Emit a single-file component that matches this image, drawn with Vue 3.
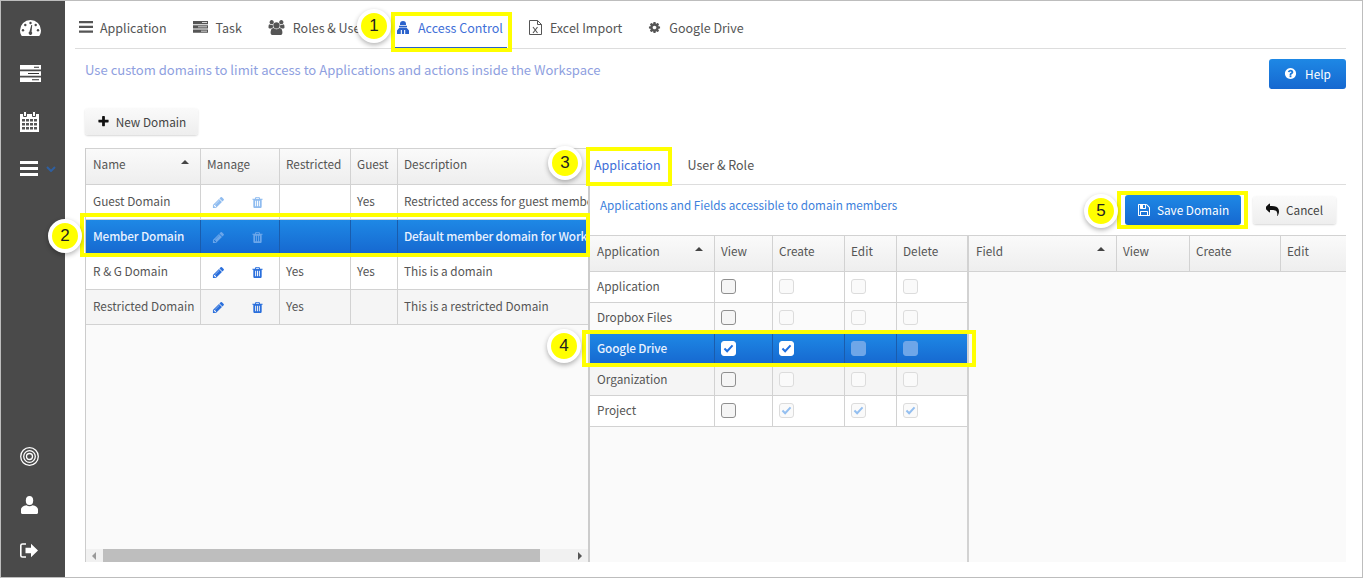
<script setup>
const P = {
  pencil: 'M491 1536l91-91-235-235-91 91v107h128v128h107zm523-928q0-22-22-22-10 0-17 7l-542 542q-7 7-7 17 0 22 22 22 10 0 17-7l542-542q7-7 7-17zm-54-192l416 416-832 832h-416v-416zm683 96q0 53-37 90l-166 166-416-416 166-165q36-38 90-38 53 0 91 38l235 234q37 39 37 91z',
  trash: 'M704 1376v-704q0-14-9-23t-23-9h-64q-14 0-23 9t-9 23v704q0 14 9 23t23 9h64q14 0 23-9t9-23zm256 0v-704q0-14-9-23t-23-9h-64q-14 0-23 9t-9 23v704q0 14 9 23t23 9h64q14 0 23-9t9-23zm256 0v-704q0-14-9-23t-23-9h-64q-14 0-23 9t-9 23v704q0 14 9 23t23 9h64q14 0 23-9t9-23zm-544-992h448l-48-117q-7-9-17-11h-317q-10 2-17 11zm928 32v64q0 14-9 23t-23 9h-96v948q0 83-47 143.500t-113 60.500h-832q-66 0-113-58.500t-47-141.500v-952h-96q-14 0-23-9t-9-23v-64q0-14 9-23t23-9h309l70-167q15-37 54-63t79-26h320q40 0 79 26t54 63l70 167h309q14 0 23 9t9 23z',
  cog: 'M1152 896q0-106-75-181t-181-75-181 75-75 181 75 181 181 75 181-75 75-181zm512-109v222q0 12-8 23t-20 13l-185 28q-19 54-39 91 35 50 107 138 10 12 10 25t-9 23q-27 37-99 108t-94 71q-12 0-26-9l-138-108q-44 23-91 38-16 136-29 186-7 28-36 28h-222q-14 0-24.500-8.500t-11.500-21.500l-28-184q-49-16-90-37l-141 107q-10 9-25 9-14 0-25-11-126-114-165-168-7-10-7-23 0-12 8-23 15-21 51-66.500t54-70.500q-27-50-41-99l-183-27q-13-2-21-12.500t-8-23.500v-222q0-12 8-23t19-13l186-28q14-46 39-92-40-57-107-138-10-12-10-24 0-10 9-23 26-36 98.500-107.500t94.500-71.500q13 0 26 10l138 107q44-23 91-38 16-136 29-186 7-28 36-28h222q14 0 24.500 8.500t11.500 21.500l28 184q49 16 90 37l142-107q9-9 24-9 13 0 25 10 129 119 165 170 7 8 7 22 0 12-8 23-15 21-51 66.500t-54 70.500q26 50 41 98l183 28q13 2 21 12.500t8 23.500z',
  save: 'M512 1536h768v-384h-768v384zm896 0h128v-896q0-14-10-38.500t-20-34.500l-281-281q-10-10-34-20t-39-10v416q0 40-28 68t-68 28h-576q-40 0-68-28t-28-68v-416h-128v1280h128v-416q0-40 28-68t68-28h832q40 0 68 28t28 68v416zm-384-928v-320q0-13-9.500-22.500t-22.500-9.500h-192q-13 0-22.500 9.500t-9.500 22.500v320q0 13 9.500 22.500t22.500 9.500h192q13 0 22.500-9.500t9.500-22.500zm640 32v928q0 40-28 68t-68 28h-1344q-40 0-68-28t-28-68v-1344q0-40 28-68t68-28h928q40 0 88 20t76 48l280 280q28 28 48 76t20 88z',
  reply: 'M1664 1120q0 166-127 451-3 7-10.500 24t-13.500 30-13 22q-12 17-28 17-15 0-23.500-10t-8.500-25q0-9 2.500-26.500t2.500-23.500q5-68 5-123 0-101-17.500-181t-48.500-138.500-80-101-105.500-69.500-133-42.500-154-21.500-175.500-6h-224v256q0 26-19 45t-45 19-45-19l-512-512q-19-19-19-45t19-45l512-512q19-19 45-19t45 19 19 45v256h224q713 0 875 403 53 134 53 333z',
  question: 'M1024 1376v-192q0-14-9-23t-23-9h-192q-14 0-23 9t-9 23v192q0 14 9 23t23 9h192q14 0 23-9t9-23zm256-672q0-88-55.500-163t-138.500-116-170-41q-243 0-371 213-15 24 8 42l132 100q7 6 19 6 16 0 25-12 53-68 86-92 34-24 86-24 48 0 85.500 26t37.500 59q0 38-20 61t-68 45q-63 28-115.500 86.500t-52.500 125.500v36q0 14 9 23t23 9h192q14 0 23-9t9-23q0-19 21.500-49.500t54.500-49.500q32-18 49-28.500t46-35 44.500-48 28-60.500 12.500-81zm384 192q0 209-103 385.500t-279.500 279.500-385.500 103-385.500-103-279.500-279.500-103-385.500 103-385.500 279.500-279.500 385.500-103 385.500 103 279.500 279.500 103 385.500z',
  plus: 'M1600 736v192q0 40-28 68t-68 28h-416v416q0 40-28 68t-68 28h-192q-40 0-68-28t-28-68v-416h-416q-40 0-68-28t-28-68v-192q0-40 28-68t68-28h416v-416q0-40 28-68t68-28h192q40 0 68 28t28 68v416h416q40 0 68 28t28 68z',
  users: 'M593 896q-162 5-265 128h-134q-82 0-138-40.500t-56-118.500q0-353 124-353 6 0 43.500 21t97.500 42.500 119 21.500q67 0 133-23-5 37-5 66 0 139 81 256zm1071 637q0 120-73 189.500t-194 69.500h-874q-121 0-194-69.500t-73-189.500q0-53 3.500-103.500t14-109 26.500-108.500 43-97.500 62-81 85.500-53.500 111.500-20q10 0 43 21.500t73 48 107 48 135 21.500 135-21.500 107-48 73-48 43-21.500q61 0 111.500 20t85.500 53.500 62 81 43 97.500 26.500 108.500 14 109 3.500 103.500zm-1024-1277q0 106-75 181t-181 75-181-75-75-181 75-181 181-75 181 75 75 181zm704 384q0 159-112.500 271.500t-271.500 112.500-271.500-112.500-112.500-271.500 112.500-271.500 271.500-112.500 271.500 112.500 112.500 271.500zm576 225q0 78-56 118.500t-138 40.500h-134q-103-123-265-128 81-117 81-256 0-29-5-66 66 23 133 23 59 0 119-21.500t97.500-42.500 43.500-21q124 0 124 353zm-128-609q0 106-75 181t-181 75-181-75-75-181 75-181 181-75 181 75 75 181z',
}

const tabs = [
  { label: 'Application', icon: 'bars' },
  { label: 'Task', icon: 'server' },
  { label: 'Roles & Users', icon: 'users' },
  { label: 'Access Control', icon: 'lock', active: true },
  { label: 'Excel Import', icon: 'excel' },
  { label: 'Google Drive', icon: 'cog' },
]

const domains = [
  { name: 'Guest Domain', guest: 'Yes', restricted: '', desc: 'Restricted access for guest members of the Workspace', faded: true },
  { name: 'Member Domain', guest: '', restricted: '', desc: 'Default member domain for Workspace users and teams', faded: true, selected: true },
  { name: 'R & G Domain', guest: 'Yes', restricted: 'Yes', desc: 'This is a domain' },
  { name: 'Restricted Domain', guest: '', restricted: 'Yes', desc: 'This is a restricted Domain', alt: true },
]

const apps = [
  { name: 'Application', boxes: [{}, { off: true }, { off: true }, { off: true }] },
  { name: 'Dropbox Files', boxes: [{}, { off: true }, { off: true }, { off: true }], soft: true },
  { name: 'Google Drive', selected: true, boxes: [{ on: true }, { on: true }, { off: true }, { off: true }] },
  { name: 'Organization', alt: true, boxes: [{}, { off: true }, { off: true }, { off: true }] },
  { name: 'Project', boxes: [{}, { off: true, on: true }, { off: true, on: true }, { off: true, on: true }] },
]

const marks = [
  { n: 1, box: 'b1', badge: 'm1' },
  { n: 2, box: 'b2', badge: 'm2' },
  { n: 3, box: 'b3', badge: 'm3' },
  { n: 4, box: 'b4', badge: 'm4' },
  { n: 5, box: 'b5', badge: 'm5' },
]
</script>

<template>
  <div class="shell">
    <aside class="rail">
      <div class="rail-group">
        <svg class="ri ri-dash" viewBox="0 0 21 16"><path fill="#fff" d="M10.500 0A10.500 10.500 0 0 0 0 10.500c0 1.800.4 3.400 1.200 4.800.2.400.5.700 1 .7h16.600c.5 0 .8-.3 1-.7.800-1.400 1.200-3 1.200-4.800A10.500 10.500 0 0 0 10.500 0z"/><g fill="#4a4a4a"><circle cx="10.500" cy="3" r="1.200"/><circle cx="5.300" cy="5" r="1.200"/><circle cx="15.700" cy="5" r="1.200"/><circle cx="3" cy="10.300" r="1.200"/><circle cx="18" cy="10.300" r="1.200"/><path d="M9.500 11.500l1.800-6.500h.9l-.6 6.700a1.800 1.800 0 1 1-2.100-.2z"/></g></svg>
        <svg class="ri ri-srv" viewBox="0 0 21 17"><path fill="#fff" d="M0 0h21v4.500H0zM0 6.200h21v4.500H0zM0 12.400h21v4.500H0z"/><path fill="#333" d="M14 1.800h5v1h-5zM8 8h11v1H8zM12 14.200h7v1h-7z"/></svg>
        <svg class="ri ri-cal" viewBox="0 0 19 21"><path fill="#fff" d="M0 3h19v18H0z"/><path fill="#fff" stroke="#4a4a4a" d="M3.500 .5h3v5h-3zM12.500 .5h3v5h-3z"/><g fill="#555"><path d="M2 8h3v2.500H2zM6 8h3v2.500H6zM10 8h3v2.500h-3zM14 8h3v2.500h-3zM2 12h3v2.500H2zM6 12h3v2.500H6zM10 12h3v2.500h-3zM14 12h3v2.500h-3zM2 16h3v2.500H2zM6 16h3v2.500H6zM10 16h3v2.500h-3zM14 16h3v2.500h-3z"/></g></svg>
        <div class="rail-menu">
          <svg class="ri-bars" viewBox="0 0 18 15"><path fill="#fff" d="M0 0h18v3H0zM0 6h18v3H0zM0 12h18v3H0z"/></svg>
          <svg class="chev" viewBox="0 0 10 6"><path fill="none" stroke="#2f5f9f" stroke-width="2" d="M1 1l4 4 4-4"/></svg>
        </div>
      </div>
      <div class="rail-group rail-bottom">
        <svg class="ri ri-target" viewBox="0 0 19 19"><g fill="none" stroke="#fff" stroke-width="1.300"><circle cx="9.500" cy="9.500" r="8.800"/><circle cx="9.500" cy="9.500" r="5.800"/><circle cx="9.500" cy="9.500" r="3"/></g></svg>
        <svg class="ri ri-user" viewBox="0 0 17 18"><ellipse cx="8.500" cy="4.500" rx="3.700" ry="4.500" fill="#fff"/><path fill="#fff" d="M1.200 18c-.7 0-1.200-.5-1.200-1.200v-3.300c0-2 2.300-3.900 5.500-4.300.8.600 1.900 1 3 1s2.200-.4 3-1c3.200.4 5.500 2.300 5.500 4.300v3.300c0 .7-.5 1.200-1.200 1.200z"/></svg>
        <svg class="ri ri-out" viewBox="0 0 18 15"><path fill="none" stroke="#fff" stroke-width="1.600" d="M6 1H2.500C1.500 1 .8 1.700.8 2.600v9.800c0 .9.700 1.600 1.700 1.600H6"/><path fill="#fff" d="M5.500 4.800H11V.8l7 6.700-7 6.700v-4H5.500z"/></svg>
      </div>
    </aside>

    <main class="main">
      <nav class="tabs">
        <a v-for="t in tabs" :key="t.label" class="tab" :class="{ active: t.active }">
          <svg v-if="t.icon === 'bars'" class="ti ti-bars" viewBox="0 0 14 12"><path d="M0 0h14v2.200H0zM0 4.800h14V7H0zM0 9.600h14v2.200H0z"/></svg>
          <svg v-else-if="t.icon === 'server'" class="ti" viewBox="0 0 15 12"><path d="M0 0h15v3.200H0zM0 4.300h15v3.200H0zM0 8.600h15v3.200H0z"/><path fill="#fff" d="M9 1.200h5v.8H9zM5 5.500h9v.8H5zM8 9.800h6v.8H8z"/></svg>
          <svg v-else-if="t.icon === 'users'" class="ti ti-users" viewBox="0 0 1920 1792"><path :d="P.users"/></svg>
          <svg v-else-if="t.icon === 'lock'" class="ti ti-lock" viewBox="0 0 12 13"><path fill="#2a62cc" d="M3 3a3 3 0 0 1 6 0v1H3zM2 4.700h8v1.300H2zM2.500 6.500h7L12 9.500V13H0V9.500z"/><path fill="#fff" d="M3.800 9h1.100v4H3.800zM7.100 9h1.100v4H7.100z"/></svg>
          <svg v-else-if="t.icon === 'excel'" class="ti ti-excel" viewBox="0 0 13 15"><path fill="none" stroke="#555" d="M.5.500h8l4 4v10H.5zM8.500.5v4h4"/><path fill="none" stroke="#555" stroke-width="1.100" d="M4 7l4.500 6M8.500 7L4 13"/></svg>
          <svg v-else class="ti ti-cog" viewBox="0 0 1792 1792"><path :d="P.cog"/></svg>
          <span>{{ t.label }}</span>
        </a>
      </nav>

      <header class="intro">
        <p>Use custom domains to limit access to Applications and actions inside the Workspace</p>
        <button class="btn primary help"><svg class="bi" viewBox="0 0 1792 1792"><path fill="#fff" :d="P.question"/></svg>Help</button>
      </header>

      <div class="toolbar">
        <button class="btn plain"><svg class="bi" viewBox="0 0 1792 1792"><path fill="#111" :d="P.plus"/></svg>New Domain</button>
      </div>

      <section class="split">
        <div class="left">
          <div class="table-clip">
            <table class="grid dom">
              <colgroup><col style="width:115px"><col style="width:79px"><col style="width:71px"><col style="width:47px"><col style="width:400px"></colgroup>
              <thead><tr>
                <th class="sorted">Name</th><th>Manage</th><th>Restricted</th><th>Guest</th><th>Description</th>
              </tr></thead>
              <tbody>
                <tr v-for="d in domains" :key="d.name" :class="{ selected: d.selected, alt: d.alt }">
                  <td>{{ d.name }}</td>
                  <td>
                    <div class="manage" :class="{ faded: d.faded }">
                      <svg viewBox="0 0 1792 1792"><path :d="P.pencil"/></svg>
                      <svg viewBox="0 0 1792 1792"><path :d="P.trash"/></svg>
                    </div>
                  </td>
                  <td>{{ d.restricted }}</td>
                  <td>{{ d.guest }}</td>
                  <td>{{ d.desc }}</td>
                </tr>
              </tbody>
            </table>
          </div>
          <div class="hscroll">
            <i class="arrow al"></i>
            <div class="thumb"></div>
            <i class="arrow ar"></i>
          </div>
        </div>

        <div class="right">
          <nav class="subtabs">
            <a class="subtab active">Application</a>
            <a class="subtab">User &amp; Role</a>
          </nav>
          <div class="actions">
            <p>Applications and Fields accessible to domain members</p>
            <button class="btn primary save"><svg class="bi bi-s" viewBox="0 0 1792 1792"><path fill="#fff" :d="P.save"/></svg>Save Domain</button>
            <button class="btn plain cancel"><svg class="bi bi-r" viewBox="0 0 1792 1792"><path fill="#111" :d="P.reply"/></svg>Cancel</button>
          </div>
          <div class="grids">
            <div class="apps-wrap">
              <table class="grid apps">
                <colgroup><col style="width:125px"><col style="width:58px"><col style="width:72px"><col style="width:52px"><col style="width:70px"></colgroup>
                <thead><tr>
                  <th class="sorted">Application</th><th>View</th><th>Create</th><th>Edit</th><th>Delete</th>
                </tr></thead>
                <tbody>
                  <tr v-for="a in apps" :key="a.name" :class="{ selected: a.selected, alt: a.alt, soft: a.soft }">
                    <td>{{ a.name }}</td>
                    <td v-for="(b, i) in a.boxes" :key="i">
                      <span class="box" :class="{ off: b.off, on: b.on }">
                        <svg v-if="b.on" viewBox="0 0 12 10"><path fill="none" stroke-width="2.200" d="M1.500 5l3 3 6-6.500"/></svg>
                      </span>
                    </td>
                  </tr>
                </tbody>
              </table>
            </div>
            <div class="fields-wrap">
              <table class="grid fields">
                <colgroup><col style="width:148px"><col style="width:73px"><col style="width:91px"><col style="width:66px"></colgroup>
                <thead><tr><th class="sorted">Field</th><th>View</th><th>Create</th><th>Edit</th></tr></thead>
              </table>
            </div>
          </div>
        </div>
      </section>
    </main>

    <template v-for="m in marks" :key="m.n">
      <div class="hl" :class="m.box"></div>
      <div class="mark" :class="m.badge">{{ m.n }}</div>
    </template>
  </div>
</template>

<style>
html, body { margin: 0; background: #fff; }
</style>

<style scoped>
.shell {
  position: relative;
  display: flex;
  box-sizing: border-box;
  width: 1363px;
  height: 578px;
  border: 1px solid #bdbdbd;
  overflow: hidden;
  background: #fff;
  color: #555;
  font-family: "Noto Sans CJK SC", "Noto Sans", sans-serif;
  font-size: 11.8px;
}
.rail {
  flex: 0 0 64px;
  display: flex;
  flex-direction: column;
  justify-content: space-between;
  background: #4a4a4a;
}
.rail-group { display: flex; flex-direction: column; align-items: flex-start; gap: 29px; padding: 19px 0 0 19px; }
.rail-bottom { padding: 0 0 19px 19px; gap: 29.5px; }
.ri { display: block; }
.ri-dash { width: 21px; height: 16px; }
.ri-srv { width: 21px; height: 17px; }
.ri-cal { width: 19px; height: 21px; }
.ri-target { width: 19px; height: 19px; }
.ri-user { width: 17px; height: 18px; margin-left: 1px; }
.ri-out { width: 18px; height: 15px; }
.rail-menu { display: flex; align-items: center; gap: 8px; }
.ri-bars { width: 18px; height: 15px; display: block; }
.chev { width: 10px; height: 6px; margin-top: 1px; }

.main { flex: 1; min-width: 0; padding: 0 16px 15px 10px; display: flex; flex-direction: column; }
.tabs { display: flex; height: 47px; border-bottom: 1px solid #ddd; gap: 18px; font-size: 12.5px; }
.tab { display: flex; align-items: center; gap: 8px; padding: 6px 4px 0; box-sizing: border-box; height: 47px; border-bottom: 1px solid transparent; }
.tab.active { color: #3f6fd8; border-bottom-color: #2a62cc; }
.ti { width: 15px; height: 12px; fill: #555; flex: none; }
.ti-bars { width: 14px; margin-right: -1px; }
.ti-users { width: 17px; height: 15px; }
.ti-lock { width: 12px; height: 13px; margin-right: 1px; }
.ti-excel { width: 13px; height: 15px; }
.ti-cog { width: 13px; height: 13px; }

.intro { display: flex; justify-content: space-between; align-items: flex-start; height: 59px; padding: 10px 0 0 10px; box-sizing: border-box; }
.intro p { margin: 2px 0 0; font-size: 13.07px; color: #8f9fe0; line-height: 18px; }

.btn {
  display: inline-flex;
  align-items: center;
  justify-content: center;
  gap: 6px;
  box-sizing: border-box;
  border: 0;
  border-radius: 3px;
  font: inherit;
  padding: 0 0 1px;
}
.primary { background: linear-gradient(#1e88e5, #1668d0); color: #fff; }
.plain { background: linear-gradient(#fafafa, #eeeeee); color: #444; box-shadow: 0 1px 2px rgba(0,0,0,.16); }
.help { width: 77px; height: 30px; gap: 8px; }
.bi { width: 13px; height: 13px; }
.bi-s { width: 14px; height: 14px; }
.bi-r { width: 14px; height: 14px; }
.toolbar { padding-left: 10px; height: 40px; }
.toolbar .btn { width: 113px; height: 27px; }

.split { flex: 1; min-height: 0; display: flex; margin-left: 10px; }
.left { flex: 0 0 505px; min-width: 0; display: flex; flex-direction: column; border-left: 1px solid #ccc; border-right: 2px solid #ccc; box-sizing: border-box; background: #fafafa; }
.table-clip { flex: 1; min-width: 0; overflow: hidden; }
.hscroll { height: 13px; background: #f1f1f1; display: flex; align-items: center; padding: 0 6px; }
.thumb { margin-left: 7px; width: 437px; height: 13px; background: #bebebe; flex: none; }
.arrow { width: 0; height: 0; border-top: 4px solid transparent; border-bottom: 4px solid transparent; }
.al { border-right: 4px solid #999; }
.ar { border-left: 4px solid #555; margin-left: auto; }

.grid { border-collapse: separate; border-spacing: 0; table-layout: fixed; background: #fff; }
.grid th {
  position: relative;
  height: 37px;
  padding: 0 6px 6px;
  text-align: left;
  font-weight: 400;
  background: linear-gradient(#fafafa, #eeeeee);
  border-top: 1px solid #d2d2d2;
  border-bottom: 1px solid #d2d2d2;
  border-right: 1px solid #d2d2d2;
  box-sizing: border-box;
  white-space: nowrap;
}
.grid td {
  padding: 0 6px 4px;
  border-bottom: 1px solid #d2d2d2;
  border-right: 1px solid #d2d2d2;
  box-sizing: border-box;
  white-space: nowrap;
  overflow: hidden;
}
.grid th:first-child, .grid td:first-child { padding-left: 7px; }
.sorted::after {
  content: "";
  position: absolute;
  right: 11px;
  top: 11px;
  border-left: 4px solid transparent;
  border-right: 4px solid transparent;
  border-bottom: 4px solid #444;
}
.dom { width: 712px; }
.dom td { height: 35px; }
.apps { width: 377px; }
.apps td { height: 31px; }
.apps th:last-child, .apps td:last-child { border-right: 0; }
.grid .alt td { background: #f5f5f5; }
.grid .soft td { background: #fbfbfb; }
.grid .selected td { background: linear-gradient(#1e88e5, #1668d0); color: #e8f1ff; font-weight: 500; letter-spacing: -.17px; border-right-color: #1a5cac; border-bottom-color: #1a5cac; }

.manage { display: flex; gap: 26px; padding-left: 5px; margin-top: 5px; }
.manage svg { width: 13px; height: 13px; fill: #2a6fdc; }
.manage.faded svg { fill: #8fbcf0; }
.selected .manage.faded svg { fill: #6ba6ea; }

.right { flex: 1; min-width: 0; display: flex; flex-direction: column; }
.subtabs { display: flex; height: 37px; box-sizing: border-box; border-bottom: 1px solid #ddd; gap: 19px; font-size: 12.5px; }
.subtab { padding: 0 4px; line-height: 33px; }
.subtab.active { color: #3f6fd8; }
.actions { display: flex; align-items: center; height: 50px; box-sizing: border-box; padding: 0 10px; gap: 12px; }
.actions p { margin: -12px auto 0 0; color: #3d7fdc; font-size: 11.7px; }
.save { width: 116px; height: 30px; flex: none; }
.cancel { width: 83px; height: 28px; flex: none; }
.grids { flex: 1; display: flex; min-height: 0; background: #fafafa; }
.apps-wrap { flex: 0 0 379px; box-sizing: border-box; border-right: 2px solid #d2d2d2; }
.fields-wrap { flex: 1; min-width: 0; overflow: hidden; }
.fields { width: 378px; }

.box {
  display: block;
  box-sizing: border-box;
  width: 15px;
  height: 15px;
  margin-top: 3px;
  border: 1px solid #8f8f8f;
  border-radius: 3px;
  background: #f5f5f5;
  position: relative;
}
.box svg { position: absolute; left: 1px; top: 2px; width: 11px; height: 9px; stroke: #1f6fe0; }
.box.off { border-color: #dcdcdc; background: #fafafa; }
.box.off svg { stroke: #94bff0; }
.selected .box { border-color: #fff; background: #fff; }
.selected .box.off { background: #6ea6e8; border-color: #6ea6e8; }

.hl { position: absolute; box-sizing: border-box; border: 4px solid #ffff00; }
.b1 { left: 390px; top: 11px; width: 121px; height: 40px; }
.b2 { left: 79px; top: 212px; width: 510px; height: 44px; }
.b3 { left: 585px; top: 146px; width: 86px; height: 39px; }
.b4 { left: 581px; top: 329px; width: 394px; height: 37px; }
.b5 { left: 1116px; top: 190px; width: 131px; height: 38px; }
.mark {
  position: absolute;
  box-sizing: border-box;
  width: 34px;
  height: 34px;
  border: 4px solid #fff;
  border-radius: 50%;
  background: #ffff00;
  color: #222;
  font-family: "Liberation Sans", sans-serif;
  font-size: 17px;
  line-height: 26px;
  text-align: center;
  box-shadow: 0 2px 5px rgba(0,0,0,.3);
}
.m1 { left: 356px; top: 8px; }
.m2 { left: 47px; top: 218px; }
.m3 { left: 547px; top: 145px; }
.m4 { left: 546px; top: 328px; }
.m5 { left: 1083px; top: 193px; }
</style>
